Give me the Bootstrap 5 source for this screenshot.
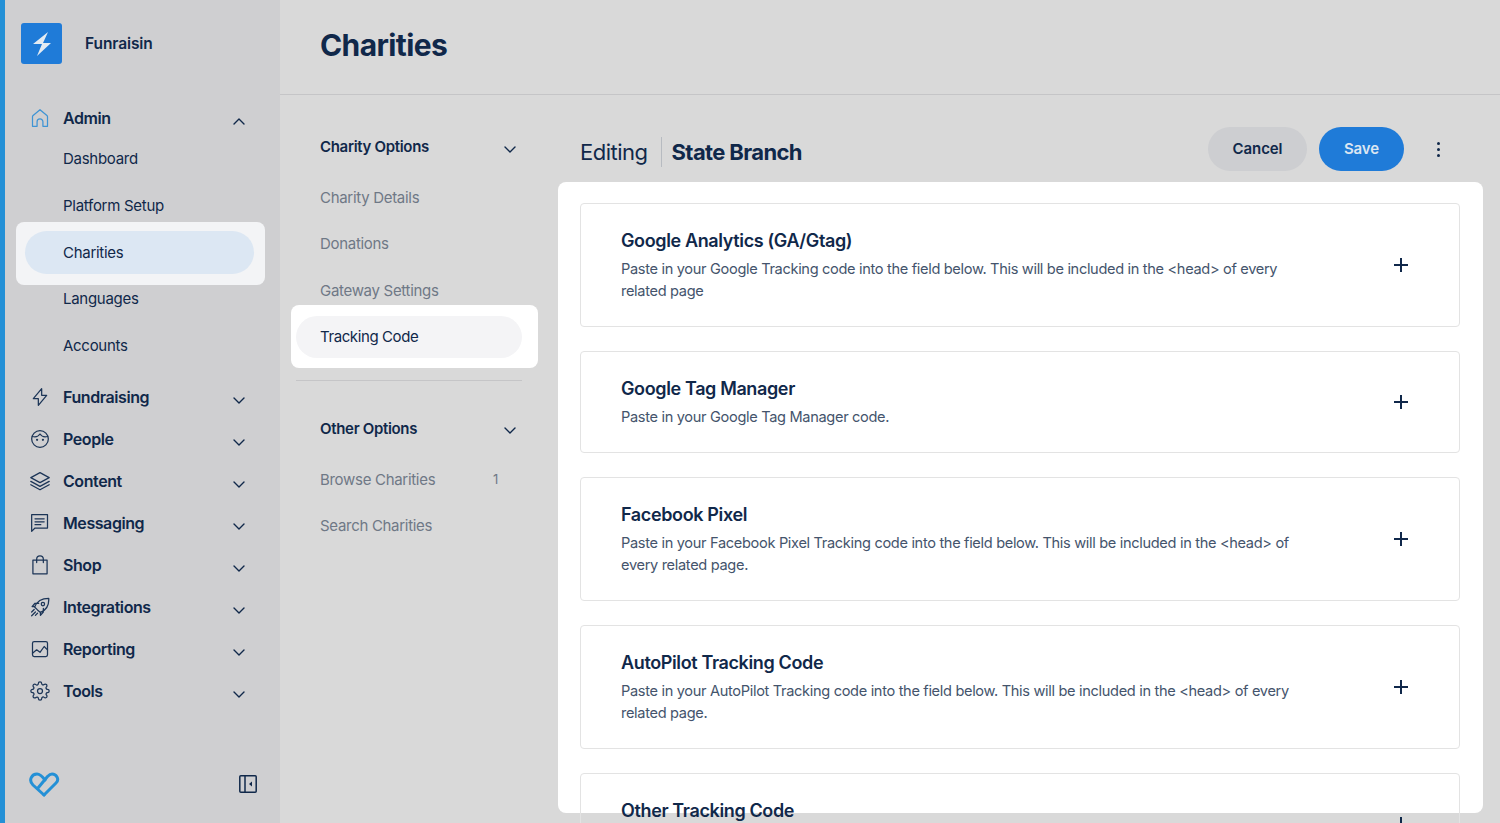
<!doctype html>
<html lang="en"><head><meta charset="utf-8"><title>Charities</title>
<link href="https://cdn.jsdelivr.net/npm/bootstrap@5.3.0/dist/css/bootstrap.min.css" rel="stylesheet">
<style>
html,body{height:823px;overflow:hidden}
body{font-family:Inter,"Liberation Sans",sans-serif;color:#10284a;background:#d9d9d9;font-size:15px;letter-spacing:-.28px}
.shell{height:823px}
.side{width:280px;flex:none;background:#cfcfd1;border-left:5px solid #2490d6;padding:23px 0 0 11px}
.brand-mark{width:41px;height:41px;background:#1f7bd8;border-radius:3px}
.brand-name{font-weight:600;font-size:15.5px;margin-left:23px;letter-spacing:-.1px}
.brandrow{margin-bottom:33px;padding-left:5px}
.ic{width:20px;height:20px;flex:none;fill:none;stroke:#1c3557;stroke-width:1.5;stroke-linecap:round;stroke-linejoin:round}
.chev{width:14px;height:14px;flex:none;fill:none;stroke:#10284a;stroke-width:1.4;stroke-linecap:round;stroke-linejoin:round}
.group-row{height:42px;padding:0 0 0 14px;font-weight:600;font-size:16px;letter-spacing:-.42px}
.group-row .lbl{margin-left:13px;flex:1}
.group-row .chev{margin:7px 34px 0 0}
.subitem{height:46.67px;padding-left:47px}
.subitem-on{height:63px;margin:-7px 0 -9px;width:249px;background:#f3f4f6;border-radius:8px;padding:9px 11px 11px 9px;position:relative}
.subitem-pill{height:43px;background:#dce7f3;border-radius:22px;padding-left:38px}
.first-sub{margin-top:-3px}
.gap-g{margin-top:6px}
.foot{margin:60px 0 0 13px;padding-right:23px}
.main-area{min-width:0}
.pagehead{height:95px;border-bottom:1px solid #c5c5c7;padding:0 0 5px 40px}
.pagehead h1{font-size:30px;font-weight:700;margin:0;letter-spacing:-.6px;color:#10284a}
.subnav{width:278px;flex:none;padding:29px 36px 0 16px}
.subhead{height:46px;padding-left:24px;padding-right:5px;font-weight:600;font-size:15px;letter-spacing:-.32px}
.subhead .chev{margin-top:3px}
.sublink{height:46.67px;padding-left:24px;color:#6f7886;letter-spacing:-.3px}
.sublink-first{margin-top:4.5px}
.subwhite{height:63px;width:247px;margin:-9.5px 0 -8px -5px;background:#fff;border-radius:8px;padding:11px 16px 10px 5px;position:relative}
.subpill{height:42px;background:#f4f4f6;border-radius:21px;padding-left:24px;letter-spacing:-.4px}
.subrule{border:0;border-top:1px solid #c5c5c7;opacity:1;margin:20px 0 25px;width:226px}
.count{margin-left:auto;margin-right:24px;font-size:13px}
.content{min-width:0;position:relative}
.edit-bar{height:87px;padding:32px 0 0 22px}
.edit-head{margin-top:10px;height:30px}
.edit-word{font-size:22px;letter-spacing:-.5px;font-weight:400;color:#10284a}
.edit-sep{width:1px;height:30px;background:#b7bbc1;margin:0 10px 0 13px}
.edit-name{font-size:22px;font-weight:700;letter-spacing:-.62px}
.pillbtn{height:44px;border-radius:22px;font-weight:600;font-size:15px;border:0;padding:0;letter-spacing:-.1px}
.btn-cancel{width:99px;background:#cdced1;color:#10284a}
.btn-save{width:85px;background:#1f7bd8;color:#dbe6f2;margin-left:12px}
.menu-dots{width:3px;margin:0 60px 0 33px;gap:3px}
.menu-dots i{display:block;width:3px;height:3px;border-radius:50%;background:#10284a}
.panel{width:925px;height:631px;background:#fff;border-radius:8px;padding:21px 23px 0 22px}
.item-card{border:1px solid #e3e3e3;border-radius:4px;padding:24px 51px 24px 40px;margin-bottom:24px;background:transparent;flex-direction:row;align-items:center;width:880px}
.item-card-last{min-height:102px}
.item-title{font-size:18px;font-weight:600;line-height:26px;margin:0;letter-spacing:-.37px;color:#10284a}
.item-desc{font-size:14.6px;line-height:22px;margin:4px 0 0;color:#44546c;letter-spacing:-.33px;width:680px}
.plus{width:14px;height:14px;margin-left:auto;flex:none;stroke:#10284a;stroke-width:2;fill:none}
</style></head><body>
<div class="shell d-flex">
<aside class="side d-flex flex-column">
  <div class="brandrow d-flex align-items-center">
    <span class="brand-mark d-flex align-items-center justify-content-center"><svg width="20" height="26" viewBox="0 0 20 26"><path d="M16 1 1 13h9L5 25l14-13h-8z" fill="#e4ebf2"/></svg></span>
    <span class="brand-name">Funraisin</span>
  </div>
  <div class="group-row d-flex align-items-center"><svg class="ic" style="stroke:#3f94d4" viewBox="0 0 24 24"><path d="M3 22V10.500a2 2 0 0 1 .7-1.500L12 2l8.300 7a2 2 0 0 1 .7 1.500V22h-5.500v-5.500a3.500 3.500 0 0 0-7 0V22z"/></svg><span class="lbl">Admin</span><svg class="chev" viewBox="0 0 14 14"><path d="m2 9 5-5 5 5"/></svg></div>
  <div class="subitem first-sub d-flex align-items-center">Dashboard</div>
  <div class="subitem d-flex align-items-center">Platform Setup</div>
  <div class="subitem-on"><div class="subitem-pill d-flex align-items-center">Charities</div></div>
  <div class="subitem d-flex align-items-center">Languages</div>
  <div class="subitem d-flex align-items-center">Accounts</div>
  <div class="gap-g"></div>
  <div class="group-row d-flex align-items-center"><svg class="ic" viewBox="0 0 24 24"><path d="M14 2v8h6L10 22v-8H4z"/></svg><span class="lbl">Fundraising</span><svg class="chev" viewBox="0 0 14 14"><path d="m2 5 5 5 5-5"/></svg></div>
  <div class="group-row d-flex align-items-center"><svg class="ic" viewBox="0 0 24 24"><circle cx="12" cy="12" r="10"/><path d="M3 9c4 1 7 0 9-3 2 3 5 4 9 3"/><circle cx="8.500" cy="13" r=".6"/><circle cx="15.500" cy="13" r=".6"/></svg><span class="lbl">People</span><svg class="chev" viewBox="0 0 14 14"><path d="m2 5 5 5 5-5"/></svg></div>
  <div class="group-row d-flex align-items-center"><svg class="ic" viewBox="0 0 24 24"><path d="m12 2 11 6-11 6L1 8zM1 12.500l11 6 11-6M1 16.500l11 6 11-6"/></svg><span class="lbl">Content</span><svg class="chev" viewBox="0 0 14 14"><path d="m2 5 5 5 5-5"/></svg></div>
  <div class="group-row d-flex align-items-center"><svg class="ic" viewBox="0 0 24 24"><path d="M2 2h19v16H6l-4 4zM6 7h11M6 10.500h11M6 14h7"/></svg><span class="lbl">Messaging</span><svg class="chev" viewBox="0 0 14 14"><path d="m2 5 5 5 5-5"/></svg></div>
  <div class="group-row d-flex align-items-center"><svg class="ic" viewBox="0 0 24 24"><path d="M3.500 6h17v16.500h-17zM8 9V5a4 4 0 0 1 8 0v4"/></svg><span class="lbl">Shop</span><svg class="chev" viewBox="0 0 14 14"><path d="m2 5 5 5 5-5"/></svg></div>
  <div class="group-row d-flex align-items-center"><svg class="ic" viewBox="0 0 24 24" stroke-width="1.300"><path d="M9 15.500 5.500 12C8 5.500 14 1.500 22.500 1.500 23 10 19 16 12.500 18.500zM6 11.500H2.500L6 7.500h4.500M12.500 18v4l3.500-4v-4.500M5 15l-3 3M6.500 18l-4.500 4.500M9 19.500l-2.500 2.500"/><circle cx="15.500" cy="8.500" r="2"/></svg><span class="lbl">Integrations</span><svg class="chev" viewBox="0 0 14 14"><path d="m2 5 5 5 5-5"/></svg></div>
  <div class="group-row d-flex align-items-center"><svg class="ic" viewBox="0 0 24 24"><rect x="3" y="3" width="18" height="18" rx="2"/><path d="m3 17 5-4 4 3 5-7 4 4"/></svg><span class="lbl">Reporting</span><svg class="chev" viewBox="0 0 14 14"><path d="m2 5 5 5 5-5"/></svg></div>
  <div class="group-row d-flex align-items-center"><svg class="ic" viewBox="0 0 24 24"><circle cx="12" cy="12" r="3"/><path d="M19.400 15a1.650 1.650 0 0 0 .33 1.820l.06.06a2 2 0 0 1 0 2.830 2 2 0 0 1-2.830 0l-.06-.06a1.650 1.650 0 0 0-1.820-.33 1.650 1.650 0 0 0-1 1.510V21a2 2 0 0 1-2 2 2 2 0 0 1-2-2v-.09A1.650 1.650 0 0 0 9 19.400a1.650 1.650 0 0 0-1.820.33l-.06.06a2 2 0 0 1-2.830 0 2 2 0 0 1 0-2.830l.06-.06a1.650 1.650 0 0 0 .33-1.820 1.650 1.650 0 0 0-1.510-1H3a2 2 0 0 1-2-2 2 2 0 0 1 2-2h.09A1.650 1.650 0 0 0 4.600 9a1.650 1.650 0 0 0-.33-1.820l-.06-.06a2 2 0 0 1 0-2.830 2 2 0 0 1 2.830 0l.06.06a1.650 1.650 0 0 0 1.820.33H9a1.650 1.650 0 0 0 1-1.510V3a2 2 0 0 1 2-2 2 2 0 0 1 2 2v.09a1.650 1.650 0 0 0 1 1.510 1.650 1.650 0 0 0 1.820-.33l.06-.06a2 2 0 0 1 2.830 0 2 2 0 0 1 0 2.830l-.06.06a1.650 1.650 0 0 0-.33 1.820V9a1.650 1.650 0 0 0 1.510 1H21a2 2 0 0 1 2 2 2 2 0 0 1-2 2h-.09a1.650 1.650 0 0 0-1.510 1z"/></svg><span class="lbl">Tools</span><svg class="chev" viewBox="0 0 14 14"><path d="m2 5 5 5 5-5"/></svg></div>
  <div class="foot d-flex align-items-center justify-content-between">
    <svg width="31" height="25" viewBox="0 0 31 25" fill="none" stroke="#2490d6" stroke-width="3" stroke-linecap="round" stroke-linejoin="round"><path d="M15 23 4 13C-1 8 3 2 8 2c3 0 5 2 8 6"/><path d="m15 23 12-12c4-4 0-9-4-9-2 0-3 1-4.500 2.500L9 16"/></svg>
    <svg width="18" height="18" viewBox="0 0 18 18" fill="none" stroke="#10284a" stroke-width="1.500"><rect x=".8" y=".8" width="16.400" height="16.400" rx="1"/><path d="M6 1v16"/><path d="M13 6.500v5L10 9z" fill="#10284a" stroke="none"/></svg>
  </div>
</aside>
<div class="main-area flex-grow-1 d-flex flex-column">
  <header class="pagehead d-flex align-items-center"><h1>Charities</h1></header>
  <div class="d-flex flex-grow-1">
    <nav class="subnav">
      <div class="subhead d-flex align-items-center justify-content-between">Charity Options<svg class="chev" viewBox="0 0 14 14"><path d="m2 5 5 5 5-5"/></svg></div>
      <div class="sublink sublink-first d-flex align-items-center">Charity Details</div>
      <div class="sublink d-flex align-items-center">Donations</div>
      <div class="sublink d-flex align-items-center">Gateway Settings</div>
      <div class="subwhite"><div class="subpill d-flex align-items-center">Tracking Code</div></div>
      <hr class="subrule">
      <div class="subhead d-flex align-items-center justify-content-between">Other Options<svg class="chev" viewBox="0 0 14 14"><path d="m2 5 5 5 5-5"/></svg></div>
      <div class="sublink sublink-first d-flex align-items-center">Browse Charities<span class="count">1</span></div>
      <div class="sublink d-flex align-items-center">Search Charities</div>
    </nav>
    <section class="content flex-grow-1">
      <div class="edit-bar d-flex align-items-start justify-content-between">
        <div class="edit-head d-flex align-items-center"><span class="edit-word">Editing</span><span class="edit-sep"></span><span class="edit-name">State Branch</span></div>
        <div class="d-flex align-items-center">
          <button class="btn pillbtn btn-cancel" type="button">Cancel</button>
          <button class="btn pillbtn btn-save" type="button">Save</button>
          <span class="menu-dots d-flex flex-column"><i></i><i></i><i></i></span>
        </div>
      </div>
      <div class="panel">
        <div class="card item-card"><div><h3 class="item-title">Google Analytics (GA/Gtag)</h3><p class="item-desc">Paste in your Google Tracking code into the field below. This will be included in the &lt;head&gt; of every related page</p></div><svg class="plus" viewBox="0 0 14 14"><path d="M7 0v14M0 7h14"/></svg></div>
        <div class="card item-card"><div><h3 class="item-title">Google Tag Manager</h3><p class="item-desc">Paste in your Google Tag Manager code.</p></div><svg class="plus" viewBox="0 0 14 14"><path d="M7 0v14M0 7h14"/></svg></div>
        <div class="card item-card"><div><h3 class="item-title">Facebook Pixel</h3><p class="item-desc">Paste in your Facebook Pixel Tracking code into the field below. This will be included in the &lt;head&gt; of every related page.</p></div><svg class="plus" viewBox="0 0 14 14"><path d="M7 0v14M0 7h14"/></svg></div>
        <div class="card item-card"><div><h3 class="item-title">AutoPilot Tracking Code</h3><p class="item-desc">Paste in your AutoPilot Tracking code into the field below. This will be included in the &lt;head&gt; of every related page.</p></div><svg class="plus" viewBox="0 0 14 14"><path d="M7 0v14M0 7h14"/></svg></div>
        <div class="card item-card item-card-last"><div class="align-self-start"><h3 class="item-title">Other Tracking Code</h3></div><svg class="plus" viewBox="0 0 14 14"><path d="M7 0v14M0 7h14"/></svg></div>
      </div>
    </section>
  </div>
</div>
</div>
</body></html>
